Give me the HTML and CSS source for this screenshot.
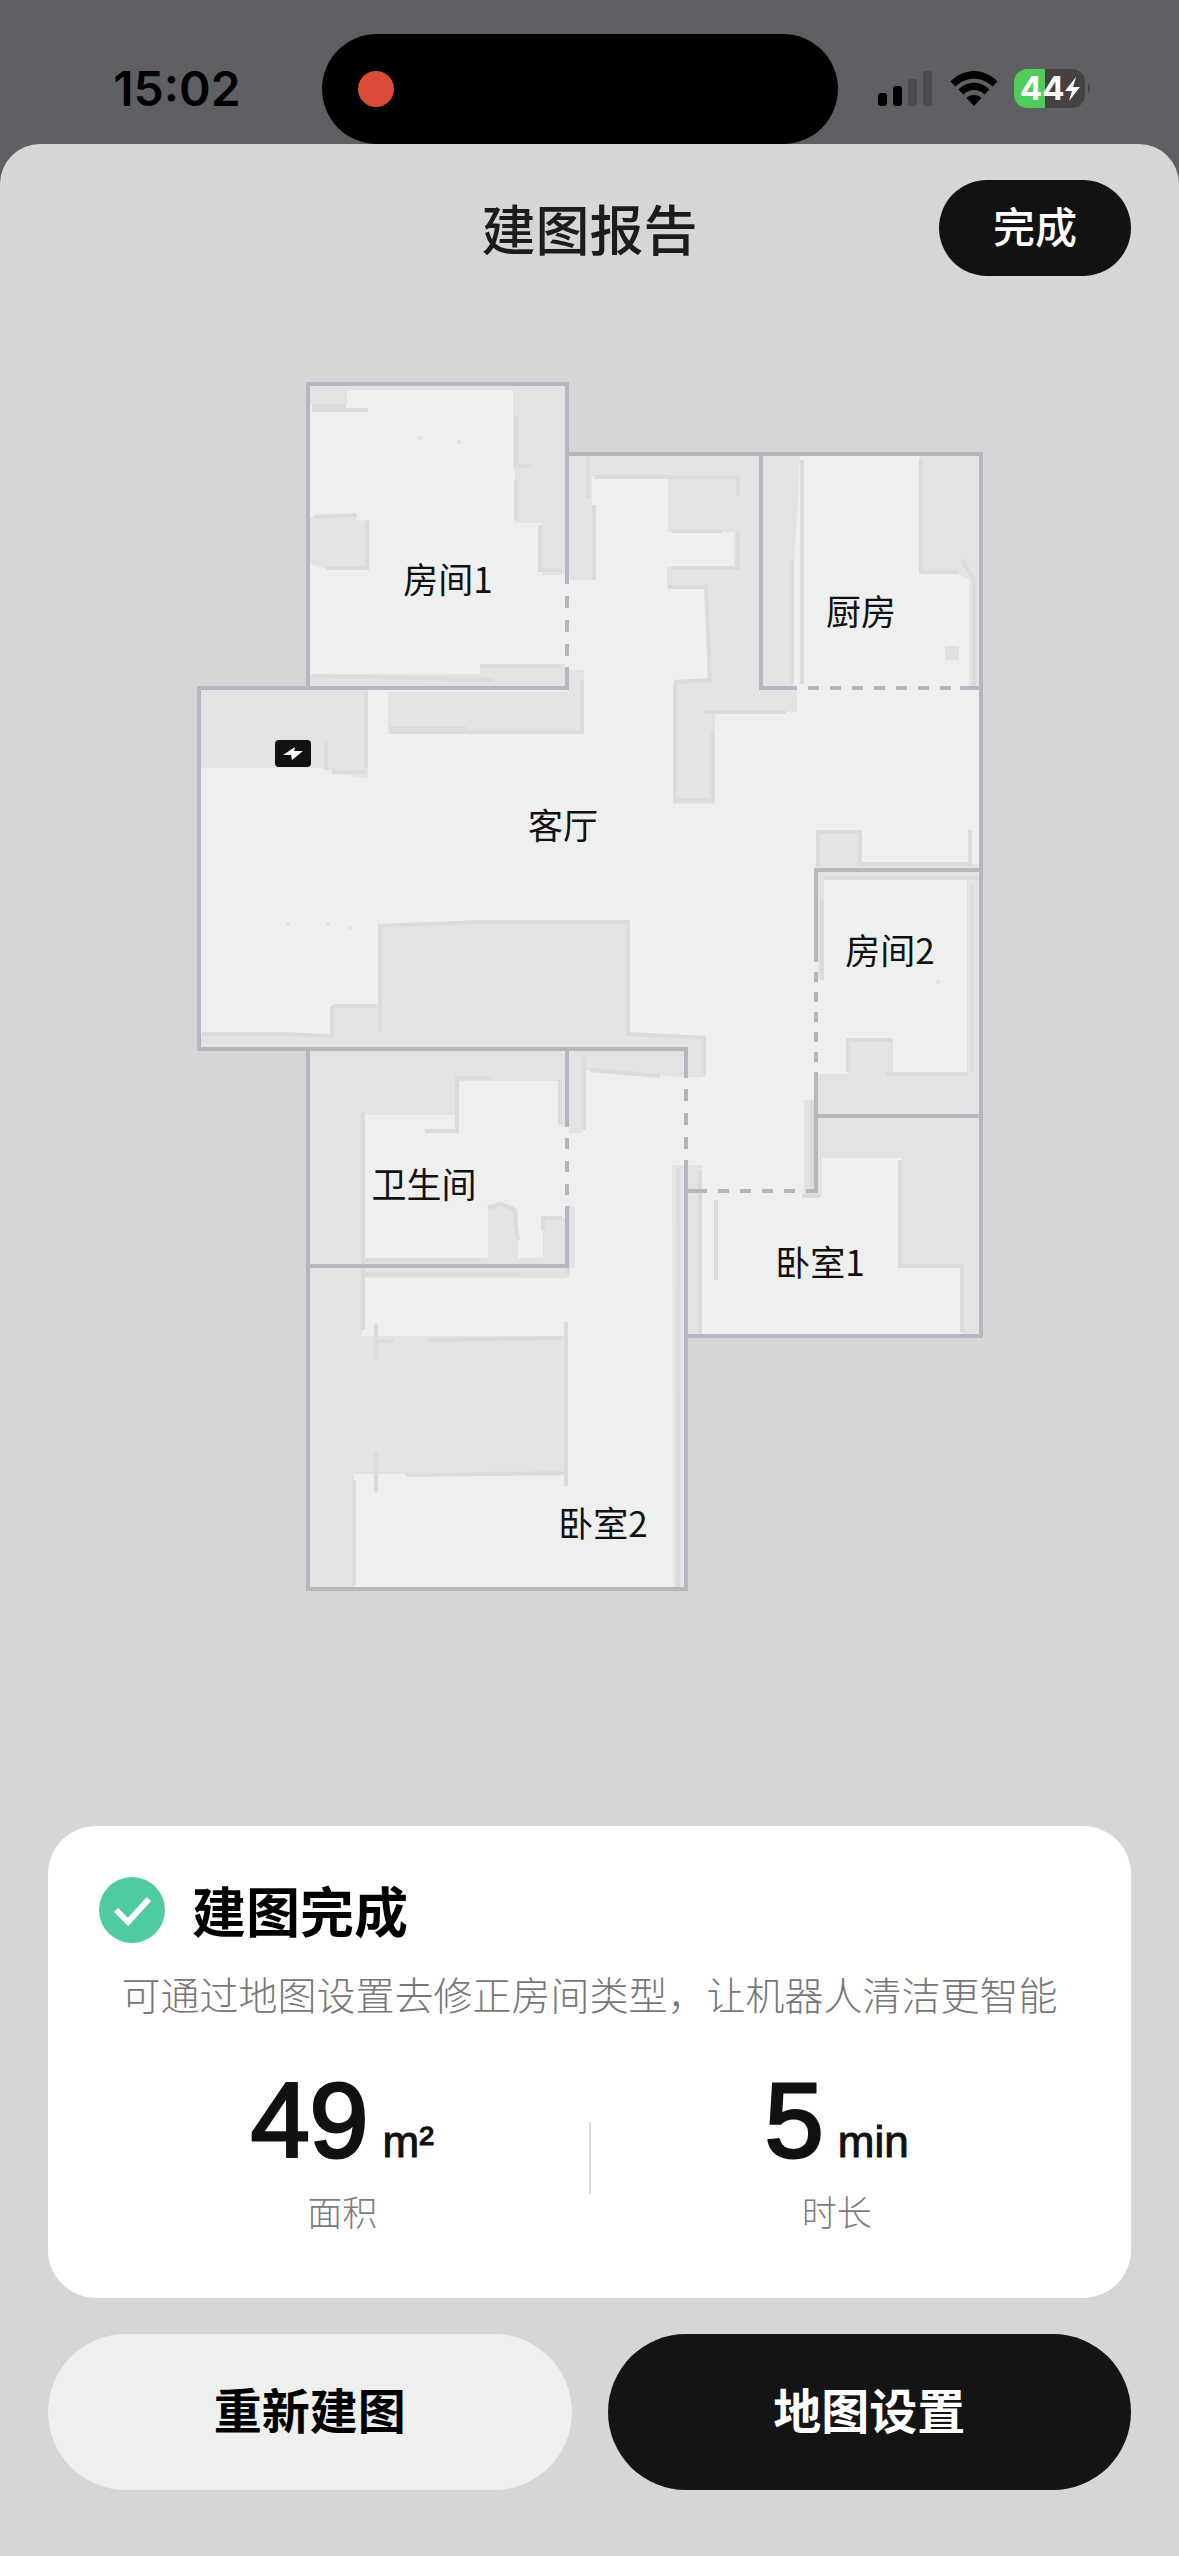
FILE: index.html
```html
<!DOCTYPE html>
<html lang="zh-CN">
<head>
<meta charset="utf-8">
<meta name="viewport" content="width=device-width, initial-scale=1">
<title>建图报告</title>
<link rel="stylesheet" href="styles.css">
</head>
<body>
<div class="status">
  <time class="clock">15:02</time>
  <div class="island"><span class="rec"></span></div>
  <div class="indicators">
    <svg class="signal" viewBox="0 0 56 36" aria-hidden="true">
      <rect x="0" y="22" width="9" height="13" rx="3"/>
      <rect x="15" y="15" width="9" height="20" rx="3"/>
      <rect class="dim" x="30" y="8" width="9" height="27" rx="3"/>
      <rect class="dim" x="45" y="0" width="9" height="35" rx="3"/>
    </svg>
    <svg class="wifi" viewBox="0 0 48 36" aria-hidden="true">
      <path d="M0.500 10.500C14-3.500 34-3.500 47.500 10.500L42.500 15.500C32 5 16 5 5.500 15.500Z"/>
      <path d="M8.500 18.500C17 9.500 31 9.500 39.500 18.500L34.500 23.500C28.500 17.500 19.500 17.500 13.500 23.500Z"/>
      <path d="M16.500 27C20.500 23 27.500 23 31.500 27L24 35Z"/>
    </svg>
    <svg class="battery" viewBox="0 0 78 40" aria-hidden="true">
      <rect class="cell" x="0" y="0" width="71" height="39" rx="13"/>
      <path class="charge" d="M13 0H31V39H13A13 13 0 0 1 0 26V13A13 13 0 0 1 13 0Z"/>
      <path class="cell" d="M74 14Q78 19 74 25Z"/>
      <text class="level" x="6" y="31">44</text>
      <path class="flash" d="M62 8L51 22H58L55 32L66 18H59Z"/>
    </svg>
  </div>
</div>

<div class="sheet">
  <header class="bar">
    <h1 class="title">建图报告</h1>
    <button class="done" type="button">完成</button>
  </header>

  <main class="map">
    <svg class="plan" viewBox="0 312 1179 1514" role="img" aria-label="户型地图">
      <path class="floor" d="M308 384H567V454H981V1336H686V1589H308V1049H199V688H308Z"/>

      <g class="blocked">
        <path d="M310 386H565V390H347V405H310Z"/>
        <path d="M513 390H565V575H542V523H515V470H513Z"/>
        <path d="M310 518L356 514V520L367 521V569L330 570L310 564Z"/>
        <path d="M310 674L480 674V664H565V686H310Z"/>
        <path d="M569 456H759V686H797V712H715V804H673V682H707V589H667V567H734V532H668V477H592V580H569Z"/>
        <path d="M763 456H800L798 500L794 560V686H763Z"/>
        <path d="M920 456H979V686H969V580L955 572H920Z"/>
        <path d="M200 690H368V778L336 774L326 768H200Z"/>
        <path d="M388 692H567V670H584V734H388Z"/>
        <path d="M378 928L480 922L626 924L628 1032L705 1036V1077H688V1047H201V1034H332V1004H378Z"/>
        <path d="M816 832H862V864H979V868H816Z"/>
        <path d="M818 872H979V1114H818V1074H848V1038H893V1074H967V880H824V980H818Z"/>
        <path d="M818 1118H979V1334H962V1266H902V1158H822V1196H804V1100H814V1188H818Z"/>
        <path d="M672 1165H702V1334H688V1587H673Z"/>
        <path d="M310 1051H565V1125H558V1081H457V1115H364V1258H488V1210Q503 1196 518 1210V1258H543V1218H565V1264H310Z"/>
        <path d="M569 1051H684V1077L582 1070V1133H569Z"/>
        <path d="M310 1268H575V1208L569 1204V1278H362V1336H568V1474H354V1587H310Z"/>
      </g>

      <g class="trace">
        <path d="M312 406H346M312 410H368M516 416V466H532M516 480V520M540 525V570H562"/>
        <path d="M314 517L357 515M367 520V568H326M312 676L400 678L494 680M480 666H560"/>
        <path d="M588 456V498M594 505V580M594 477H738V496M672 531H722M738 531V568H672M668 587H706L710 680L674 682"/>
        <path d="M675 684V800H712V730M704 712H786M792 560V684M802 460V684M921 458V572H958M962 560L974 580V686"/>
        <path d="M366 692V768M332 772H366M390 728H466M390 732H582V680M326 740V770"/>
        <path d="M380 1032V926L480 922H628V1034L704 1038V1074M334 1006H376M202 1034H280L332 1036V1006"/>
        <path d="M818 866V832H860V864H970V830M822 900V980M824 878H978M972 885V1072"/>
        <path d="M848 1072V1040H892M886 1074H968M812 1100V1190M820 1196H802M900 1160V1266H962V1332"/>
        <path d="M363 1112V1330M425 1131H457V1078H492M560 1080V1124M365 1260H480M365 1274H520"/>
        <path d="M488 1208L500 1204L514 1210L518 1240M543 1230V1218H562M568 1206V1274"/>
        <path d="M584 1056V1130M590 1070L660 1076M678 1168V1587M700 1170V1334M716 1200V1280"/>
        <path d="M376 1324V1360M378 1341H394M428 1340L562 1338M566 1322V1486M406 1475L564 1473M376 1452V1492M354 1480V1585"/>
      </g>

      <g class="specks">
        <circle cx="420" cy="438" r="2"/><circle cx="459" cy="442" r="2"/>
        <circle cx="288" cy="924" r="2"/><circle cx="328" cy="924" r="2"/><circle cx="350" cy="928" r="2"/>
        <circle cx="938" cy="982" r="2"/>
        <rect x="945" y="646" width="14" height="14"/>
      </g>

      <g class="wall">
        <path d="M567 582V384H308V688M567 669V688H199V1049H686V1076"/>
        <path d="M567 454H981V1336H686M761 454V688H795M962 688H981"/>
        <path d="M981 870H816V960M816 1074V1191H808M816 1116H981M686 1191H705"/>
        <path d="M686 1162V1589H308V1049M567 1049V1125M567 1208V1266H308"/>
      </g>
      <g class="doorway">
        <path stroke-dasharray="12 12" d="M567 596V656"/>
        <path stroke-dasharray="11 11" d="M808 688H951"/>
        <path stroke-dasharray="10 10" d="M816 972V1062"/>
        <path stroke-dasharray="11 11" d="M718 1191H795"/>
        <path stroke-dasharray="12 12" d="M686 1089V1149"/>
        <path stroke-dasharray="11 12" d="M567 1138V1195"/>
      </g>

      <g class="dock">
        <rect x="275" y="740" width="36" height="27" rx="4"/>
        <path d="M295 747L283 755H291L292 760L303 751H294Z"/>
      </g>

      <g class="room">
        <text x="448" y="593">房间1</text>
        <text x="861" y="625">厨房</text>
        <text x="563" y="839">客厅</text>
        <text x="890" y="964">房间2</text>
        <text x="424" y="1198">卫生间</text>
        <text x="820" y="1276">卧室1</text>
        <text x="603" y="1537">卧室2</text>
      </g>
    </svg>
  </main>

  <section class="card">
    <div class="result">
      <svg class="check" viewBox="0 0 72 72" aria-hidden="true">
        <circle cx="36" cy="36" r="33"/>
        <path d="M20 36L32 48L53 25"/>
      </svg>
      <h2 class="headline">建图完成</h2>
    </div>
    <p class="hint">可通过地图设置去修正房间类型，让机器人清洁更智能</p>
    <dl class="stats">
      <div class="stat">
        <dd class="value">49<span class="unit">m²</span></dd>
        <dt class="name">面积</dt>
      </div>
      <div class="rule"></div>
      <div class="stat">
        <dd class="value">5<span class="unit">min</span></dd>
        <dt class="name">时长</dt>
      </div>
    </dl>
  </section>

  <footer class="actions">
    <button class="action light" type="button">重新建图</button>
    <button class="action dark" type="button">地图设置</button>
  </footer>
</div>
</body>
</html>
```
FILE: styles.css
```css
* {
  box-sizing: border-box;
  margin: 0;
  padding: 0;
}

body {
  display: flex;
  flex-direction: column;
  min-height: 100vh;
  background: #5f6064;
  color: #111;
  font-family: Inter, "Noto Sans CJK SC", sans-serif;
}

button {
  border: 0;
  font-family: inherit;
  cursor: pointer;
}

/* Status bar */
.status {
  display: grid;
  grid-template-columns: 322fr 516px 341fr;
  align-items: center;
  padding-top: 34px;
}

.clock {
  padding-left: 32px;
  color: #000;
  font-size: 48px;
  font-weight: 600;
  line-height: 60px;
  text-align: center;
}

.island {
  display: flex;
  align-items: center;
  height: 110px;
  padding-left: 36px;
  border-radius: 55px;
  background: #000;
}

.rec {
  width: 36px;
  height: 36px;
  border-radius: 50%;
  background: #dc4b38;
}

.indicators {
  display: flex;
  align-items: center;
  gap: 16px;
  padding-left: 40px;
}

.signal {
  width: 56px;
  height: 36px;
}

.signal .dim {
  fill: #4c4c50;
}

.wifi {
  width: 48px;
  height: 36px;
}

.battery {
  width: 78px;
  height: 40px;
}

.cell {
  fill: #454241;
}

.charge {
  fill: #53cb5b;
}

.level {
  fill: #fff;
  font-size: 33px;
  font-weight: 700;
}

.flash {
  fill: #fff;
}

/* Sheet */
.sheet {
  display: flex;
  flex: 1;
  flex-direction: column;
  border-radius: 40px 40px 0 0;
  background: #d6d6d6;
}

.bar {
  display: grid;
  grid-template-columns: 1fr auto 1fr;
  align-items: center;
  padding: 36px 48px;
}

.title,
.headline {
  font-family: "Noto Sans CJK SC", sans-serif;
  font-size: 54px;
  line-height: 72px;
}

.title {
  grid-column: 2;
  color: #1c1c1c;
  font-weight: 500;
}

.done {
  justify-self: end;
  width: 192px;
  height: 96px;
  border-radius: 48px;
  background: #121212;
  color: #fff;
  font-size: 42px;
  font-weight: 500;
  line-height: 60px;
}

/* Floor plan */
.plan {
  display: block;
  width: 100%;
}

.floor {
  fill: #eef0ef;
}

.blocked {
  fill: #e3e3e4;
}

.trace {
  fill: none;
  stroke: #dadbdb;
  stroke-width: 4;
}

.specks {
  fill: #e0e1e1;
}

.wall {
  fill: none;
  stroke: #b5b6c0;
  stroke-width: 4;
  stroke-linecap: square;
}

.doorway {
  fill: none;
  stroke: #b4b5b6;
  stroke-width: 4;
}

.dock rect {
  fill: #111;
}

.dock path {
  fill: #fff;
}

.room {
  fill: #111;
  font-family: "Noto Sans CJK SC", sans-serif;
  font-size: 35px;
  text-anchor: middle;
}

/* Result card */
.card {
  margin: 0 48px;
  padding: 48px 48px 60px;
  border-radius: 48px;
  background: #fff;
}

.result {
  display: flex;
  align-items: center;
  gap: 24px;
}

.check {
  width: 72px;
  height: 72px;
}

.check circle {
  fill: #4fcba1;
}

.check path {
  fill: none;
  stroke: #fff;
  stroke-width: 6;
}

.headline {
  color: #000;
  font-weight: 700;
}

.hint {
  margin-top: 20px;
  color: #777;
  font-size: 39px;
  font-weight: 300;
  line-height: 60px;
  text-align: center;
}

.stats {
  display: grid;
  grid-template-columns: 1fr 2px 1fr;
  margin-top: 38px;
}

.stat {
  text-align: center;
}

.value {
  margin-bottom: 12px;
  font-family: "Liberation Sans", sans-serif;
  font-size: 106px;
  line-height: 112px;
  -webkit-text-stroke: 3px #111;
}

.unit {
  margin-left: 14px;
  font-size: 44px;
  line-height: 44px;
  -webkit-text-stroke: 1px #111;
}

.name {
  color: #7c7c7c;
  font-size: 35px;
  font-weight: 300;
  line-height: 50px;
}

.rule {
  height: 72px;
  margin-top: 58px;
  background: #dcdcdc;
}

/* Bottom actions */
.actions {
  display: grid;
  grid-template-columns: 1fr 1fr;
  gap: 36px;
  padding: 36px 48px 64px;
}

.action {
  height: 156px;
  border-radius: 78px;
  font-size: 48px;
  font-weight: 700;
  line-height: 60px;
}

.light {
  background: #eef0ef;
  color: #000;
}

.dark {
  background: #141414;
  color: #fff;
}
```
